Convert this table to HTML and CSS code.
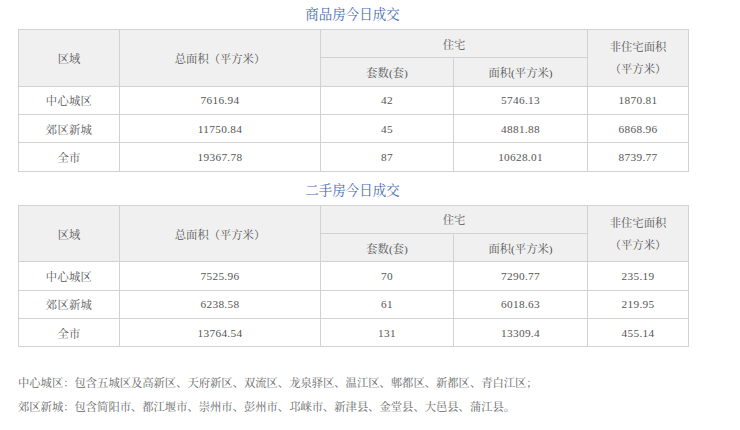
FILE: index.html
```html
<!DOCTYPE html>
<html lang="zh-CN">
<head>
<meta charset="utf-8">
<title>成交</title>
<link rel="stylesheet" href="styles.css">
</head>
<body>
<div class="page">
  <h2 class="title">商品房今日成交</h2>
  <table class="data">
    <colgroup><col class="c1"><col class="c2"><col class="c3"><col class="c4"><col class="c5"></colgroup>
    <tr class="head"><th rowspan="2">区域</th><th rowspan="2">总面积（平方米）</th><th colspan="2">住宅</th><th rowspan="2" class="two">非住宅面积<br>（平方米）</th></tr>
    <tr class="head"><th>套数(套)</th><th>面积(平方米)</th></tr>
    <tr><td>中心城区</td><td>7616.94</td><td>42</td><td>5746.13</td><td>1870.81</td></tr>
    <tr><td>郊区新城</td><td>11750.84</td><td>45</td><td>4881.88</td><td>6868.96</td></tr>
    <tr><td>全市</td><td>19367.78</td><td>87</td><td>10628.01</td><td>8739.77</td></tr>
  </table>
  <h2 class="title">二手房今日成交</h2>
  <table class="data">
    <colgroup><col class="c1"><col class="c2"><col class="c3"><col class="c4"><col class="c5"></colgroup>
    <tr class="head"><th rowspan="2">区域</th><th rowspan="2">总面积（平方米）</th><th colspan="2">住宅</th><th rowspan="2" class="two">非住宅面积<br>（平方米）</th></tr>
    <tr class="head"><th>套数(套)</th><th>面积(平方米)</th></tr>
    <tr><td>中心城区</td><td>7525.96</td><td>70</td><td>7290.77</td><td>235.19</td></tr>
    <tr><td>郊区新城</td><td>6238.58</td><td>61</td><td>6018.63</td><td>219.95</td></tr>
    <tr><td>全市</td><td>13764.54</td><td>131</td><td>13309.4</td><td>455.14</td></tr>
  </table>
  <div class="notes">
    <p>中心城区：包含五城区及高新区、天府新区、双流区、龙泉驿区、温江区、郫都区、新都区、青白江区；</p>
    <p>郊区新城：包含简阳市、都江堰市、崇州市、彭州市、邛崃市、新津县、金堂县、大邑县、蒲江县。</p>
  </div>
</div>
</body>
</html>
```
FILE: styles.css
```css
html, body {
  margin: 0;
  padding: 0;
  background: #ffffff;
}
body {
  font-family: "Liberation Serif", "Noto Serif CJK SC", "Noto Sans CJK SC", serif;
  color: #555555;
  font-size: 11.3px;
}
.page {
  width: 669px;
  padding-left: 18px;
}
.title {
  margin: 0;
  height: 29px;
  line-height: 29px;
  text-align: center;
  font-size: 13.5px;
  font-weight: normal;
  color: #4a6cb3;
}
.data {
  width: 670px;
  border-collapse: collapse;
  table-layout: fixed;
  margin-bottom: 4px;
}
.c1 { width: 101px; }
.c2 { width: 201px; }
.c3 { width: 133px; }
.c4 { width: 134px; }
.c5 { width: 101px; }
.data th, .data td {
  border: 1px solid #d2d2d2;
  text-align: center;
  font-weight: normal;
  padding: 0;
  height: 27.35px;
}
.data td {
  letter-spacing: 0.3px;
}
.data th {
  background: #f0f0f0;
}
.data th.two {
  line-height: 22px;
}
.notes {
  margin-top: 24px;
  color: #666666;
}
.notes p {
  margin: 0;
  line-height: 24px;
}
```
